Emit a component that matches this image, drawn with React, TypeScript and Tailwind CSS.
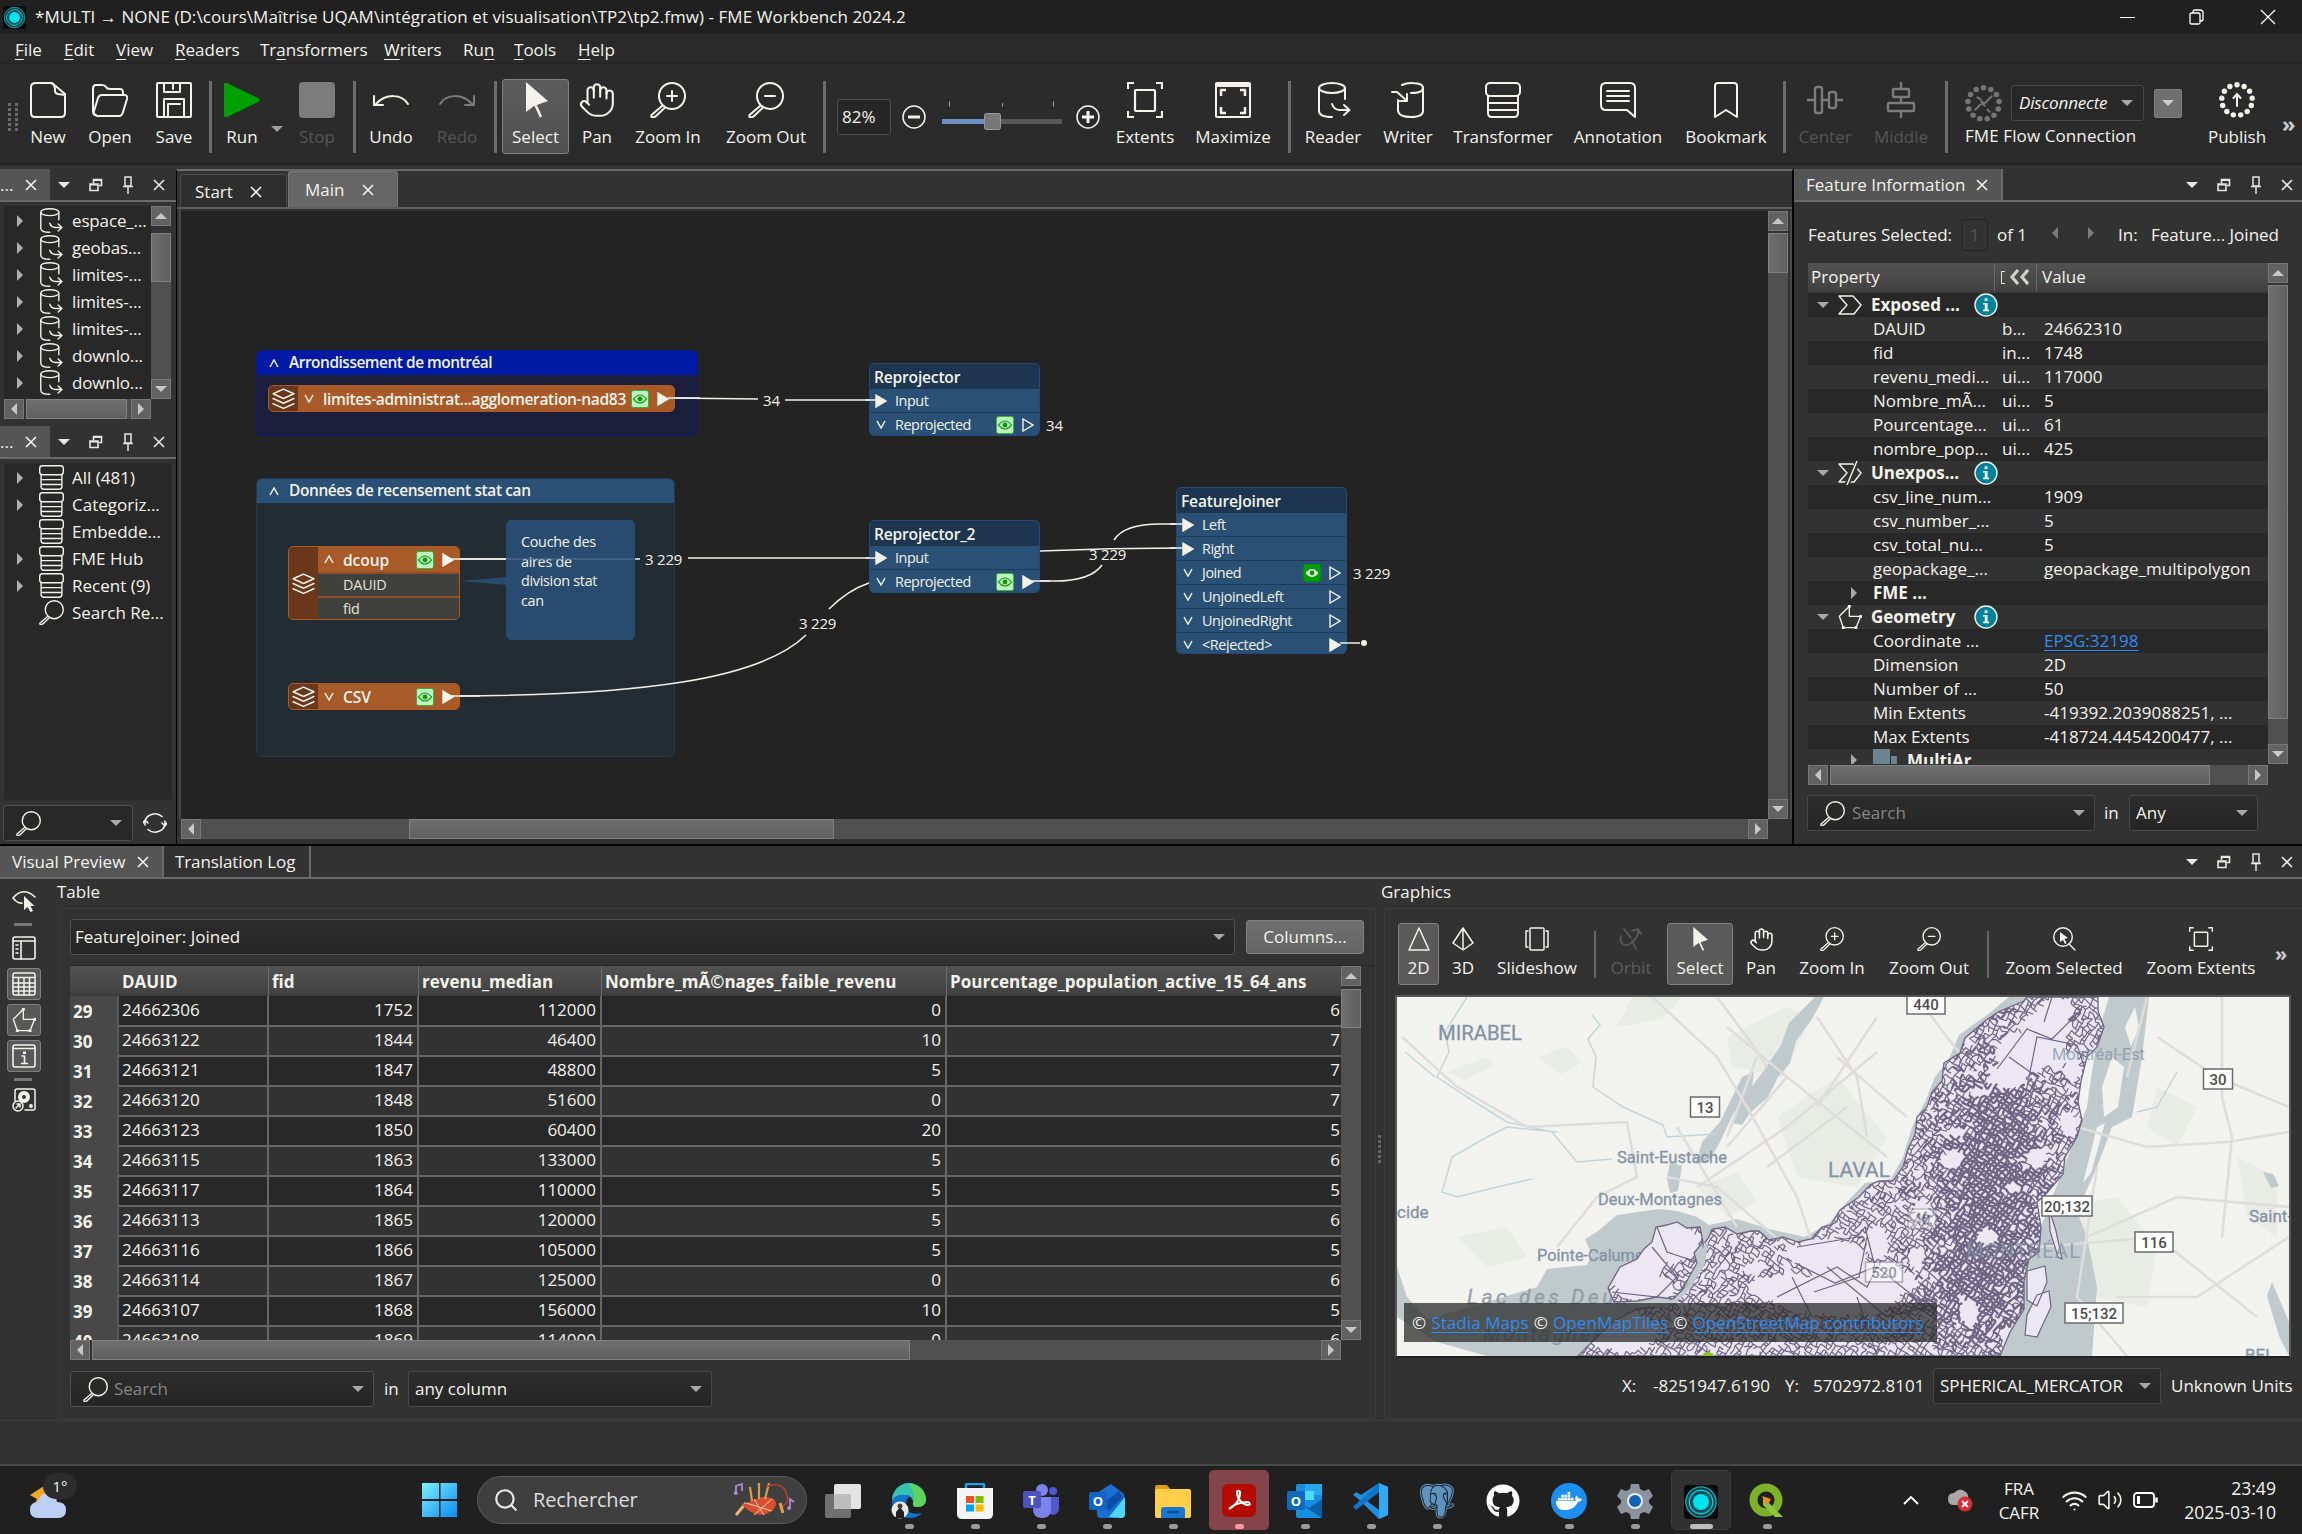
import React from "react";
import { Hand, Wifi, Volume2, Search as SearchIcon } from "lucide-react";
import { FaGithub, FaDocker } from "react-icons/fa";
import { BiLogoPostgresql } from "react-icons/bi";

type P = { children?: React.ReactNode; className?: string };

/* ---------- drawing helpers ---------- */
function G({ children, className = "w-9 h-9", vb = "0 0 36 36", sw = 2 }: P & { vb?: string; sw?: number }) {
  return (
    <svg className={"shrink-0 " + className} viewBox={vb} fill="none" stroke="currentColor" strokeWidth={sw} strokeLinecap="round" strokeLinejoin="round">
      {children}
    </svg>
  );
}
const ZoomGlyph = ({ sign, className }: { sign?: "+" | "-"; className?: string }) => (
  <G className={className}>
    <circle cx="22" cy="14" r="13" />
    <path d="M12 24 L1.500 33 Q0.500 35 3 35.500 L5.500 34.500 L14.500 26" />
    {sign && <path d="M17 14h10" />}
    {sign === "+" && <path d="M22 9v10" />}
  </G>
);
const NewGlyph = () => (
  <G><path d="M6 1h16l13 11v19q0 4-4 4H5q-4 0-4-4V5q0-4 5-4z" /><path d="M22 1.5q3 1.500 3 6v1q0 3 3 3.500l7 1" /></G>
);
const OpenGlyph = () => (
  <G><path d="M4 33 Q1 33 1 29 V7 Q1 3 4 3 H10 Q13 3 14 5 Q15 7 18 7 H28 Q31 7 31 11 V13" /><path d="M10 13 H32 Q36 13 35 17 L31 30 Q30 34 27 34 H5 Q1 33 2 29 L6 16 Q7 13 10 13z" /></G>
);
const SaveGlyph = () => (
  <G><rect x="1" y="1" width="34" height="34" rx="1" /><path d="M8 1v9h16V1M17 1v6M8 35V17h20v18M12 35V22h12" /></G>
);
const UndoGlyph = ({ flip }: { flip?: boolean }) => (
  <G><g transform={flip ? "translate(36 0) scale(-1 1)" : undefined}><path d="M35 22 C29 12 13 11 3 22" /><path d="M1 14v9h9" /></g></G>
);
const CursorGlyph = ({ className }: { className?: string }) => (
  <svg className={"shrink-0 " + (className ?? "h-9 w-9")} viewBox="0 0 36 36"><path d="M8 0v30l8-6 14-5z" fill="currentColor" /><path d="M17 22l6 13" stroke="currentColor" strokeWidth="2.500" /></svg>
);
const ExtentsGlyph = ({ className }: { className?: string }) => (
  <G className={className} sw={2.2}><path strokeLinecap="butt" d="M1 7V1h6M29 1h6v6M35 29v6h-6M7 35H1v-6" /><rect x="8" y="8" width="20" height="21" rx="1" /></G>
);
const MaximizeGlyph = () => (
  <G><rect x="1" y="1" width="34" height="34" rx="1" /><path d="M1 3h34" strokeWidth="4" /><path strokeLinecap="butt" d="M6 14V8h5M25 8h5v6M30 25v6h-5M11 31H6v-6" strokeWidth="2.500" /></G>
);
const ReaderGlyph = ({ className }: { className?: string }) => (
  <G className={className}><ellipse cx="17" cy="6" rx="13" ry="5" /><path d="M4 6v23q0 6 13 6M30 6v11" /><path d="M17 22q2 6 8 6h9M29 23l5.500 5-5.500 5" /></G>
);
const WriterGlyph = () => (
  <G><path d="M12 3q4-2 9-2 12 0 12 5t-12 5M33 6v23q0 6-12 6T8 29V18" /><path d="M2 10h5l9 8M17 12v7h-8" /></G>
);
const TransformerGlyph = ({ className }: { className?: string }) => (
  <G className={className}><rect x="1" y="1" width="34" height="13" rx="4" /><path d="M3 14v17q0 4 4 4h22q4 0 4-4V14M3 21h30M3 28h30" /></G>
);
const NoteGlyph = () => (
  <G><path d="M6 1h24q5 0 5 5v29l-8-7H6q-5 0-5-5V6q0-5 5-5z" /><path d="M7 9h22M7 14h22M7 19h22" /></G>
);
const MarkGlyph = () => <G><path d="M7 35V4q0-3 3-3h16q3 0 3 3v31l-11-7z" /></G>;
const CenterGlyph = () => (
  <G sw={2.4}><path d="M0 18h7M15 18h7M30 18h6" /><rect x="8" y="5" width="7" height="26" rx="2" /><rect x="22" y="10" width="7" height="16" rx="2" /></G>
);
const MiddleGlyph = () => (
  <G sw={2.4}><path d="M18 0v6M18 15v6M18 29v7" /><rect x="10" y="7" width="16" height="8" rx="1" /><rect x="5" y="21" width="26" height="8" rx="1" /></G>
);
const dots = Array.from({ length: 13 }, (_, i) => {
  const a = (i / 13) * Math.PI * 2 - Math.PI / 2;
  return [18 + 15.3 * Math.cos(a), 18 + 15.3 * Math.sin(a)];
});
const DotRing = ({ children, className }: P) => (
  <G className={className}>{dots.map(([x, y], i) => <circle key={i} cx={x} cy={y} r="2.700" fill="currentColor" stroke="none" />)}{children}</G>
);
const GeometryGlyph = ({ className }: { className?: string }) => (
  <G className={className} sw={2}><path d="M17 2L2 17l6 17h19l7-17H17z" /><circle cx="17" cy="2" r="1.500" /><circle cx="34" cy="17" r="1.500" /><circle cx="8" cy="34" r="1.500" /><circle cx="27" cy="34" r="1.500" /></G>
);
const Layers = ({ className = "w-6 h-6" }: P) => (
  <G className={className} vb="0 0 24 24" sw={1.5}><path d="M12 3l10 4.500-10 4.500L2 7.500zM2 12l10 4.500L22 12M2 17l10 4.500L22 17" /></G>
);
const Tri = ({ dir, className = "" }: { dir: "u" | "d" | "l" | "r"; className?: string }) => (
  <svg className={"shrink-0 " + className} width="12" height="12" viewBox="0 0 12 12">
    <path fill="currentColor" d={{ u: "M0 9L6 3l6 6z", d: "M0 3l6 6 6-6z", l: "M9 0L3 6l6 6z", r: "M3 0l6 6-6 6z" }[dir]} />
  </svg>
);
const X = ({ className = "" }: P) => (
  <svg className={"shrink-0 " + className} width="12" height="12" viewBox="0 0 12 12"><path d="M1 1l10 10M11 1L1 11" stroke="currentColor" strokeWidth="1.600" /></svg>
);
const Float = () => (
  <svg width="14" height="14" viewBox="0 0 14 14" fill="none" stroke="currentColor" strokeWidth="1.600"><path d="M4.500 5V1.500h8v6H10M4.500 2.200h8M1 6h8v6.500H1zM1 6.800h8" /></svg>
);
const Pin = () => (
  <svg width="12" height="18" viewBox="0 0 12 18" fill="none" stroke="currentColor" strokeWidth="1.500"><path d="M3 1h6v9H3zM1 10.500h10M6 11v7" /></svg>
);
const DockControls = ({ className = "" }: P) => (
  <div className={"flex shrink-0 items-center text-[#e8e8e0] " + className}>
    <div className="flex w-8 justify-center"><Tri dir="d" /></div>
    <div className="flex w-8 justify-center"><Float /></div>
    <div className="flex w-8 justify-center"><Pin /></div>
    <div className="flex w-[30px] justify-center"><X /></div>
  </div>
);

/* ---------- scroll bars ---------- */
const sbBtn = "flex items-center justify-center bg-[#626262] border border-[#777] text-[#c8c8c4] shrink-0 w-[20px] h-[20px]";
const thumb = "from-[#6e6e6e] to-[#606060] border border-[#808080] shrink-0";
function VScroll({ size, gap = "h-[2px]", className = "" }: { size: string; gap?: string; className?: string }) {
  return (
    <div className={"flex w-[20px] shrink-0 flex-col bg-[#505050] " + className}>
      <div className={sbBtn}><Tri dir="u" /></div>
      <div className={"shrink-0 bg-[#333] " + gap} />
      <div className={"bg-gradient-to-r " + thumb + " " + size} />
      <div className="flex-1" />
      <div className={sbBtn}><Tri dir="d" /></div>
    </div>
  );
}
function HScroll({ size, gap = "w-[2px] bg-[#333]", className = "" }: { size: string; gap?: string; className?: string }) {
  return (
    <div className={"flex h-[20px] shrink-0 bg-[#505050] " + className}>
      <div className={sbBtn}><Tri dir="l" /></div>
      <div className={"shrink-0 " + gap} />
      <div className={"bg-gradient-to-b " + thumb + " " + size} />
      <div className="flex-1" />
      <div className={sbBtn}><Tri dir="r" /></div>
    </div>
  );
}

/* ---------- title, menu, main toolbar ---------- */
const FmeIcon = ({ className }: { className?: string }) => (
  <svg className={className} viewBox="0 0 36 36">
    <rect width="36" height="36" rx="4" fill="#08090b" />
    <circle cx="18" cy="18" r="16" fill="#083c42" stroke="#12aab5" strokeWidth="1.500" />
    <circle cx="18" cy="18" r="12.500" fill="#064e56" stroke="#14c4d0" strokeWidth="1.500" />
    <circle cx="18" cy="18" r="8.500" fill="#00e4f2" />
  </svg>
);
function TitleBar() {
  return (
    <div className="flex h-[34px] items-center bg-[#202020]">
      <FmeIcon className="ml-[3px] h-[23px] w-[23px]" />
      <span className="ml-[9px] text-[17px] tracking-[0.06px]">*MULTI → NONE (D:\cours\Maîtrise UQAM\intégration et visualisation\TP2\tp2.fmw) - FME Workbench 2024.2</span>
      <div className="ml-auto flex items-center">
        <div className="h-px w-[15px] bg-white" />
        <svg className="ml-[54px]" width="15" height="16" viewBox="0 0 15 16" fill="none" stroke="#fff" strokeWidth="1.300"><rect x="1" y="4" width="10" height="11" rx="1.500" /><path d="M4 4V3q0-2 2-2h5q3 0 3 3v6q0 2-2 2h-1" /></svg>
        <svg className="mr-[26px] ml-[56px]" width="16" height="16" viewBox="0 0 16 16"><path d="M1 1l14 14M15 1L1 15" stroke="#fff" strokeWidth="1.300" /></svg>
      </div>
    </div>
  );
}
const menus: [string, string, string, string][] = [
  ["", "F", "ile", "w-[49px]"], ["", "E", "dit", "w-[52px]"], ["", "V", "iew", "w-[59px]"], ["", "R", "eaders", "w-[85px]"],
  ["Tr", "a", "nsformers", "w-[124px]"], ["", "W", "riters", "w-[79px]"], ["Ru", "n", "", "w-[51px]"], ["", "T", "ools", "w-[64px]"], ["", "H", "elp", "w-[60px]"],
];
function MenuBar() {
  return (
    <div className="flex h-[30px] items-center border-b border-[#242424] bg-[#2a2a2a] pt-[2px] pl-[15px]">
      {menus.map(([a, u, b, w]) => (
        <span key={a + u + b} className={w}>{a}<u className="underline-offset-[3px]">{u}</u>{b}</span>
      ))}
    </div>
  );
}
function Tool({ label, icon, cls, dim, on }: { label: string; icon: React.ReactNode; cls: string; dim?: boolean; on?: boolean }) {
  return (
    <div className={"flex h-[75px] shrink-0 flex-col items-center rounded-[3px] border pt-[2px] " + (on ? "border-[#808080] bg-gradient-to-b from-[#5c5c5c] to-[#505050] " : "border-transparent ") + (dim ? "text-[#555] " : "") + cls}>
      <div className={"flex h-9 items-center justify-center " + (dim ? "text-[#7c7c7c]" : "text-[#f3f3ea]")}>{icon}</div>
      <span className="mt-[6px] leading-[26px]">{label}</span>
    </div>
  );
}
const Sep = ({ cls }: { cls: string }) => <div className={"h-[72px] w-[3px] shrink-0 bg-[#6c6c6c] " + cls} />;
function MainToolbar() {
  return (
    <div className="flex h-[101px] items-center border-b-2 border-[#222] bg-[#2b2b2b] pt-[6px]">
      <div className="ml-2 grid w-3 grid-cols-2 gap-x-[2px] gap-y-[2px]">
        {Array.from({ length: 12 }, (_, i) => <div key={i} className="h-[3px] w-[3px] bg-[#6a6a6a]" />)}
      </div>
      <Tool label="New" icon={<NewGlyph />} cls="w-[56px]" />
      <Tool label="Open" icon={<OpenGlyph />} cls="ml-[2px] w-[64px]" />
      <Tool label="Save" icon={<SaveGlyph />} cls="ml-[4px] w-[56px]" />
      <Sep cls="ml-[7px]" />
      <Tool label="Run" cls="ml-[6px] w-[48px]" icon={<svg width="36" height="36" viewBox="0 0 36 36"><path d="M0 3q0-3 3-2l31 15q3 2 0 4L3 35q-3 1-3-2z" fill="#00a000" /></svg>} />
      <div className="flex w-[22px] justify-center pt-6 text-[#a0a0a0]"><Tri dir="d" /></div>
      <Tool label="Stop" dim cls="ml-[4px] w-[50px]" icon={<div className="h-9 w-9 rounded-[4px] bg-[#7c7c7c]" />} />
      <Sep cls="ml-[11px]" />
      <Tool label="Undo" icon={<UndoGlyph />} cls="ml-[7px] w-[56px]" />
      <Tool label="Redo" dim icon={<UndoGlyph flip />} cls="ml-[10px] w-[56px]" />
      <Sep cls="ml-[9px]" />
      <Tool label="Select" on icon={<CursorGlyph />} cls="ml-[5px] w-[67px]" />
      <Tool label="Pan" icon={<Hand size={38} strokeWidth={1.3} />} cls="ml-[4px] w-[48px]" />
      <Tool label="Zoom In" icon={<ZoomGlyph sign="+" />} cls="ml-[7px] w-[80px]" />
      <Tool label="Zoom Out" icon={<ZoomGlyph sign="-" />} cls="ml-[8px] w-[100px]" />
      <Sep cls="ml-[7px]" />
      <div className="ml-[11px] flex h-[36px] w-[54px] items-center rounded-[3px] border border-[#4e4e4e] bg-[#262626] pl-[4px]">82%</div>
      <G className="ml-[11px] h-6 w-6" vb="0 0 24 24" sw={1.5}><circle cx="12" cy="12" r="11" /><path d="M6 12h12" strokeWidth="3" strokeLinecap="butt" /></G>
      <svg className="ml-[16px] shrink-0" width="120" height="40" viewBox="0 0 120 40">
        <path d="M7.500 4v6M60.500 6v4M111.500 4v6" stroke="#888" strokeWidth="1.200" />
        <rect x="0" y="22" width="42" height="5" fill="#6d8fc4" /><rect x="58" y="22" width="62" height="5" fill="#565656" />
        <rect x="42.500" y="16.500" width="16" height="16" rx="2" fill="#787878" stroke="#999" />
      </svg>
      <G className="ml-[14px] h-6 w-6" vb="0 0 24 24" sw={1.5}><circle cx="12" cy="12" r="11" /><path d="M6 12h12M12 6v12" strokeWidth="3" strokeLinecap="butt" /></G>
      <Tool label="Extents" icon={<ExtentsGlyph />} cls="ml-[11px] w-[68px]" />
      <Tool label="Maximize" icon={<MaximizeGlyph />} cls="ml-[12px] w-[84px]" />
      <Sep cls="ml-[13px]" />
      <Tool label="Reader" icon={<ReaderGlyph />} cls="ml-[10px] w-[64px]" />
      <Tool label="Writer" icon={<WriterGlyph />} cls="ml-[13px] w-[60px]" />
      <Tool label="Transformer" icon={<TransformerGlyph />} cls="ml-[13px] w-[104px]" />
      <Tool label="Annotation" icon={<NoteGlyph />} cls="ml-[15px] w-[96px]" />
      <Tool label="Bookmark" icon={<MarkGlyph />} cls="ml-[16px] w-[88px]" />
      <Sep cls="ml-[13px]" />
      <Tool label="Center" dim icon={<CenterGlyph />} cls="ml-[9px] w-[60px]" />
      <Tool label="Middle" dim icon={<MiddleGlyph />} cls="ml-[16px] w-[60px]" />
      <Sep cls="ml-[14px]" />
      <div className="ml-[17px] flex h-[75px] w-[217px] shrink-0 flex-col pt-[6px]">
        <div className="flex h-9 items-center">
          <DotRing className="h-[37px] w-[37px] text-[#757575]"><path d="M10 24l4-4q3-3 5 0M26 11l-5 5q-2 3-5 0M12 12l3 2M22 24l2 2" /></DotRing>
          <div className="ml-[9px] flex h-9 w-[133px] items-center rounded-[3px] border border-[#484848] bg-[#282828] pl-[7px] italic">
            <span className="tracking-[-0.15px]">Disconnecte</span><Tri dir="d" className="ml-auto mr-[10px] text-[#a8a8a4]" />
          </div>
          <div className="ml-[10px] flex h-[29px] w-[28px] items-center justify-center rounded-[2px] border border-[#808080] bg-[#707070] text-[#ccc]"><Tri dir="d" /></div>
        </div>
        <span className="mt-[2px] leading-[26px] tracking-[0.1px]">FME Flow Connection</span>
      </div>
      <Tool label="Publish" icon={<DotRing><path d="M18 24V12M14.500 16L18 12l3.500 4" /></DotRing>} cls="ml-[23px] w-[64px]" />
      <span className="ml-[13px] pt-3 text-[22px] font-bold leading-none text-[#ccc]">»</span>
    </div>
  );
}

/* ---------- left docks ---------- */
function SmallDockTab() {
  return (
    <div className="flex h-[33px] shrink-0 items-center border-b-2 border-[#6a6a6a] bg-[#323232]">
      <div className="flex h-full w-[50px] items-center bg-[#555]"><span className="w-[25px]">...</span><X /></div>
      <DockControls className="-ml-[2px]" />
    </div>
  );
}
const files = ["espace_...", "geobas...", "limites-...", "limites-...", "limites-...", "downlo...", "downlo..."];
const gallery = ["All (481)", "Categoriz...", "Embedde...", "FME Hub", "Recent (9)", "Search Re..."];
function LeftColumn() {
  return (
    <div className="flex w-[176px] shrink-0 flex-col overflow-hidden">
      <SmallDockTab />
      <div className="mt-[4px] ml-[4px] flex h-[193px] w-[167px] shrink-0 bg-[#282828]">
        <div className="flex-1 overflow-hidden pt-px">
          {files.map((f, i) => (
            <div key={i} className="flex h-[27px] items-center">
              <Tri dir="r" className="ml-[10px] text-[#b0b0ac]" />
              <ReaderGlyph className="ml-[12px] h-[25px] w-[25px]" />
              <span className="ml-[9px] whitespace-nowrap tracking-[-0.15px]">{f}</span>
            </div>
          ))}
        </div>
        <VScroll size="h-[49px]" gap="h-[7px]" />
      </div>
      <HScroll size="w-[101px]" className="ml-[4px] w-[147px]" />
      <div className="h-[7px] shrink-0" />
      <SmallDockTab />
      <div className="mt-[4px] ml-[4px] h-[337px] w-[168px] shrink-0 border border-[#2c2c2c] bg-[#282828]">
        {gallery.map((f, i) => (
          <div key={f} className="flex h-[27px] items-center">
            <Tri dir="r" className={"ml-[9px] " + (i === 2 || i === 5 ? "text-transparent" : "text-[#b0b0ac]")} />
            {i === 5 ? <ZoomGlyph className="ml-[13px] h-[25px] w-[25px]" /> : <TransformerGlyph className="ml-[13px] h-[25px] w-[25px]" />}
            <span className="ml-[8px] whitespace-nowrap">{f}</span>
          </div>
        ))}
      </div>
      <div className="mt-[5px] ml-[3px] flex items-center">
        <div className="flex h-[36px] w-[130px] items-center rounded-[3px] border border-[#4e4e4e] bg-[#282828]">
          <ZoomGlyph className="ml-[12px] h-[25px] w-[25px]" /><Tri dir="d" className="mr-[10px] ml-auto text-[#a8a8a4]" />
        </div>
        <G className="ml-[10px] h-[24px] w-[24px]" vb="0 0 24 24" sw={1.6}><path d="M2 14V11A10 9 0 0 1 19 5.500M22 10v3a10 9 0 0 1-17 5.500M0 12l2-3 3 3M19 12l3 3 2-3" /></G>
      </div>
    </div>
  );
}

/* ---------- canvas ---------- */
const Eye = ({ solid }: { solid?: boolean }) => (
  <svg className="shrink-0" width="18" height="18" viewBox="0 0 18 18">
    <rect x=".5" y=".5" width="17" height="17" rx="2" fill={solid ? "#00a000" : "#bff0bf"} stroke={solid ? "#0a8a0a" : "#35b535"} />
    <path d="M2.500 9q6.500-8 13 0-6.500 8-13 0z" fill={solid ? "#e8f8e8" : "none"} stroke={solid ? "none" : "#1d9d1d"} strokeWidth="1.200" />
    <circle cx="9" cy="9" r="2.400" fill="#0b9a0b" />
  </svg>
);
const Chev = ({ up, className = "" }: { up?: boolean; className?: string }) => (
  <svg className={"shrink-0 " + className} width="10" height="9" viewBox="0 0 10 9" fill="none" stroke="#f0f0e8" strokeWidth="1.500"><path d={up ? "M1 8l4-7 4 7" : "M1 1l4 7 4-7"} /></svg>
);
const Port = ({ open, className = "" }: { open?: boolean; className?: string }) => (
  <svg className={"shrink-0 " + className} width="12" height="14" viewBox="0 0 12 14"><path d="M1 1l10 6-10 6z" fill={open ? "none" : "#f3f3ea"} stroke="#f3f3ea" strokeWidth="1.400" /></svg>
);
function Source({ name, cls, up, rows, nameCls = "tracking-[-0.1px]" }: { name: string; cls: string; up?: boolean; rows?: string[]; nameCls?: string }) {
  return (
    <div className={"absolute flex overflow-hidden rounded-[5px] border border-[#a85a28] bg-[#6b371a] " + cls}>
      <div className="flex w-[29px] shrink-0 items-center justify-center"><Layers className="h-[25px] w-[25px]" /></div>
      <div className="flex flex-1 flex-col">
        <div className="flex h-[25px] shrink-0 items-center bg-[#a85a28]">
          <Chev up={up} className="ml-[6px]" /><span className={"ml-[9px] whitespace-nowrap text-[15.6px] font-semibold " + nameCls}>{name}</span>
          <span className="ml-auto flex"><Eye /></span><Port className="mr-[5px] ml-[8px]" />
        </div>
        {rows?.map((r) => <div key={r} className="flex h-[24px] items-center border-t-2 border-[#8a4d28] bg-[#40403d] pb-px pl-[25px] text-[14.4px] tracking-[-0.2px] text-[#e4e4dc]">{r}</div>)}
      </div>
    </div>
  );
}
type PortRow = [string, "in" | "open" | "full", ("light" | "solid")?];
function Transformer({ name, cls, rows }: { name: string; cls: string; rows: PortRow[] }) {
  return (
    <div className={"absolute w-[171px] overflow-hidden rounded-[5px] border border-[#234a78] bg-[#1d354f] " + cls}>
      <div className="flex h-[25px] items-center pl-[4px] text-[15.6px] font-semibold tracking-[-0.2px]">{name}</div>
      {rows.map(([label, kind, eye]) => (
        <div key={label} className="flex h-[24px] items-center border-b border-[#1d3c5c] bg-[#2a5075] text-[14.4px]">
          {kind === "in" ? <Port className="mr-[8px] ml-[5px]" /> : <Chev className="mr-[9px] ml-[6px]" />}
          <span className={label.startsWith("Unjoined") ? "tracking-[-0.4px]" : label === "<Rejected>" ? "tracking-[-0.4px]" : "tracking-[-0.45px]"}>{label}</span>
          <span className="ml-auto flex">{eye && <Eye solid={eye === "solid"} />}</span>
          {kind !== "in" && <Port open={kind === "open"} className="mr-[5px] ml-[8px]" />}
        </div>
      ))}
    </div>
  );
}
const Count = ({ cls, t }: { cls: string; t: string }) => <span className={"absolute whitespace-nowrap text-[15px] leading-[20px] tracking-[-0.2px] " + cls}>{t}</span>;
function Canvas() {
  return (
    <div className="relative h-[608px] w-[1587px] shrink-0 overflow-hidden bg-[#232323]">
      <div className="absolute -top-[211px] -left-[181px] h-[900px] w-[1800px]">
        <div className="absolute top-[350px] left-[256px] h-[86px] w-[442px] overflow-hidden rounded-[6px] border border-[#0a1a80] bg-[#1c1f3b]">
          <div className="flex h-[24px] items-center bg-[#001aa6] pl-[12px] text-[15.4px] font-semibold tracking-[-0.45px]"><Chev up className="mr-[10px]" />Arrondissement de montréal</div>
        </div>
        <div className="absolute top-[478px] left-[256px] h-[279px] w-[419px] overflow-hidden rounded-[6px] border border-[#203a55] bg-[#232b33]">
          <div className="flex h-[24px] items-center bg-[#2a5075] pl-[12px] text-[15.4px] font-semibold tracking-[-0.35px]"><Chev up className="mr-[10px]" />Données de recensement stat can</div>
        </div>
        <svg className="absolute top-0 left-0" width="1800" height="900" fill="none" stroke="#f0f0e8" strokeWidth="1.600">
          <path d="M670 398L758 399M785 400H870M452 559H506M634 559h6M688 558H872" />
          <path d="M454 696C640 695 760 680 806 635M829 609Q848 590 869 583" />
          <path d="M1040 551Q1110 548 1180 548" />
          <path d="M1032 581H1050Q1090 582 1102 565M1114 540Q1124 524 1160 524H1180" />
        </svg>
        <Source name="limites-administrat...agglomeration-nad83" nameCls="tracking-[-0.36px]" cls="left-[268px] top-[385px] w-[407px] h-[27px]" />
        <Source name="dcoup" up rows={["DAUID", "fid"]} cls="left-[288px] top-[546px] w-[172px] h-[74px]" />
        <Source name="CSV" cls="left-[288px] top-[683px] w-[172px] h-[27px]" />
        <svg className="absolute top-[570px] left-[460px]" width="47" height="22"><path d="M0 11L47 7v8z" fill="#2a4b70" /></svg>
        <div className="absolute top-[520px] left-[506px] h-[120px] w-[129px] rounded-[5px] border border-[#234a70] bg-[#2a4b70] pt-[11px] pl-[14px] text-[14.4px] leading-[19.7px] tracking-[-0.3px]">
          Couche des<br />aires de<br />division stat<br />can
        </div>
        <Transformer name="Reprojector" cls="left-[869px] top-[363px] h-[73px]" rows={[["Input", "in"], ["Reprojected", "open", "light"]]} />
        <Transformer name="Reprojector_2" cls="left-[869px] top-[520px] h-[73px]" rows={[["Input", "in"], ["Reprojected", "full", "light"]]} />
        <Transformer name="FeatureJoiner" cls="left-[1176px] top-[487px] h-[167px]" rows={[["Left", "in"], ["Right", "in"], ["Joined", "open", "solid"], ["UnjoinedLeft", "open"], ["UnjoinedRight", "open"], ["<Rejected>", "full"]]} />
        <svg className="absolute top-0 left-0" width="1800" height="900" fill="none" stroke="#f0f0e8" strokeWidth="1.600">
          <path d="M668 398h32M450 559h56M450 696h30M866 400h14M866 558h14M1030 581h20M1170 524h14M1170 548h14M1340 643h20" />
          <path d="M506 559h128" stroke="#58779a" strokeWidth="1.200" />
          <circle cx="1364" cy="643" r="3" fill="#f0f0e8" stroke="none" />
        </svg>
        <Count t="34" cls="left-[763px] top-[390px]" />
        <Count t="3 229" cls="left-[645px] top-[549px]" />
        <Count t="3 229" cls="left-[799px] top-[613px]" />
        <Count t="34" cls="left-[1046px] top-[415px]" />
        <Count t="3 229" cls="left-[1089px] top-[544px]" />
        <Count t="3 229" cls="left-[1353px] top-[563px]" />
      </div>
    </div>
  );
}
function CanvasDock() {
  return (
    <div className="flex w-[1617px] shrink-0 flex-col border-x border-t-2 border-x-black border-t-[#6a6a6a] bg-[#323232]">
      <div className="flex h-[38px] shrink-0 items-end border-b-2 border-[#5e5e5e]">
        <div className="ml-[3px] flex h-[33px] w-[107px] items-center rounded-t-[3px] border border-b-0 border-[#4a4a4a] bg-[#2e2e2e] pt-[2px] pl-[14px]">Start<X className="ml-[17px]" /></div>
        <div className="ml-px flex h-[36px] w-[110px] items-center rounded-t-[3px] border border-b-0 border-[#787878] bg-[#666] pl-[16px]">Main<X className="ml-[18px]" /></div>
      </div>
      <div className="ml-[2px] flex shrink-0 border-l-2 border-[#484848] pt-[2px]">
        <Canvas />
        <VScroll size="h-[40px]" className="h-[608px]" />
        <div className="ml-[2px] w-[2px] shrink-0 bg-[#4a4a4a]" />
      </div>
      <HScroll size="w-[425px]" gap="w-[208px]" className="ml-[4px] w-[1587px]" />
    </div>
  );
}

/* ---------- feature information ---------- */
type FRow = { k: string; t?: string; v?: string; h?: "exp" | "unexp" | "geo"; b?: boolean; link?: boolean };
const frows: FRow[] = [
  { k: "Exposed ...", h: "exp" }, { k: "DAUID", t: "b...", v: "24662310" }, { k: "fid", t: "in...", v: "1748" }, { k: "revenu_medi...", t: "ui...", v: "117000" },
  { k: "Nombre_mÃ...", t: "ui...", v: "5" }, { k: "Pourcentage...", t: "ui...", v: "61" }, { k: "nombre_pop...", t: "ui...", v: "425" },
  { k: "Unexpos...", h: "unexp" }, { k: "csv_line_num...", v: "1909" }, { k: "csv_number_...", v: "5" }, { k: "csv_total_nu...", v: "5" },
  { k: "geopackage_...", v: "geopackage_multipolygon" }, { k: "FME ...", b: true }, { k: "Geometry", h: "geo" },
  { k: "Coordinate ...", v: "EPSG:32198", link: true }, { k: "Dimension", v: "2D" }, { k: "Number of ...", v: "50" },
  { k: "Min Extents", v: "-419392.2039088251, ..." }, { k: "Max Extents", v: "-418724.4454200477, ..." },
];
const Info = () => (
  <svg className="mr-0 ml-auto shrink-0" width="24" height="24" viewBox="0 0 24 24"><circle cx="12" cy="12" r="11" fill="#00829b" stroke="#f0f0e8" strokeWidth="1.400" /><path d="M10.700 5.300h2.800v2.600h-2.800zM9.300 10h4.200v6.500H15v1.700H9.200v-1.700h1.600v-4.800H9.300z" fill="#fff" /></svg>
);
function HeadIcon({ h }: { h: string }) {
  if (h === "geo") return <GeometryGlyph className="h-[24px] w-[24px]" />;
  return (
    <G className="h-[24px] w-[24px]" vb="0 0 24 24" sw={1.4}>
      <path d="M1 3h14l8 9-7 9H1l8-9z" />{h === "unexp" && <><path d="M9 23L20 1" stroke="#323232" strokeWidth="5" /><path d="M9 24L19 0" /></>}
    </G>
  );
}
function Combo({ children, cls }: P & { cls: string }) {
  return (
    <div className={"flex h-[36px] items-center rounded-[3px] border border-[#484848] bg-gradient-to-b from-[#2c2c2c] to-[#262626] " + cls}>
      {children}<Tri dir="d" className="mr-[9px] ml-auto text-[#a8a8a4]" />
    </div>
  );
}
function FeatureDock() {
  return (
    <div className="flex min-w-0 flex-1 flex-col border-l border-black bg-[#323232]">
      <div className="flex h-[33px] shrink-0 items-center border-b-2 border-[#6a6a6a]">
        <div className="flex h-full w-[209px] items-center border-r-2 border-[#6a6a6a] bg-[#555] pl-[12px]">Feature Information<X className="mr-[13px] ml-auto" /></div>
        <DockControls className="mr-0 ml-auto" />
      </div>
      <div className="flex h-[61px] shrink-0 items-center pt-[5px] pl-[14px]">
        <span className="w-[153px] tracking-[-0.03px]">Features Selected:</span>
        <div className="flex h-[32px] w-[27px] items-center justify-center rounded-[3px] border border-[#242424] text-[#565656]">1</div>
        <span className="ml-[9px] w-[52px]">of 1</span>
        <Tri dir="l" className="-mt-1 text-[#7c7c7c]" /><Tri dir="r" className="-mt-1 ml-[24px] text-[#7c7c7c]" />
        <span className="ml-[21px] w-[33px]">In:</span><span>Feature... Joined</span>
      </div>
      <div className="ml-[14px] flex h-[501px] shrink-0">
        <div className="w-[460px] overflow-hidden">
          <div className="flex h-[30px] border-b-2 border-[#3c3c3c] bg-gradient-to-b from-[#525252] to-[#424242]">
            <div className="flex w-[187px] items-center border-r border-[#6a6a6a] pl-[3px]">Property</div>
            <div className="flex w-[42px] items-center border-r border-[#6a6a6a] pl-[6px]">
              <div className="mr-[4px] h-[13px] w-[4px] border-y border-l border-[#e0e0da]" />
              <G className="h-[16px] w-[20px] text-[#d0d0cc]" vb="0 0 20 16" sw={3.2}><path strokeLinecap="butt" strokeLinejoin="miter" d="M9 1L3 8l6 7M19 1l-6 7 6 7" /></G>
            </div>
            <div className="flex flex-1 items-center pl-[5px]">Value</div>
          </div>
          {frows.map((r, i) => (
            <div key={i} className={"flex h-[24px] items-center whitespace-nowrap " + (i % 2 ? "bg-[#323232]" : "bg-[#282828]")}>
              {r.h ? (
                <div className="flex w-[190px] items-center pl-[9px]">
                  <Tri dir="d" className="mr-[9px] text-[#a8a8a4]" /><HeadIcon h={r.h} />
                  <span className="ml-[9px] font-bold">{r.k}</span><Info />
                </div>
              ) : (
                <>
                  <div className="flex w-[194px] items-center pl-[65px]">
                    {r.b && <Tri dir="r" className="mr-[13px] -ml-[25px] text-[#a8a8a4]" />}<span className={r.b ? "font-bold" : ""}>{r.k}</span>
                  </div>
                  <div className="w-[42px]">{r.t}</div>
                  <div className={r.link ? "text-[#2f8cf0] underline underline-offset-[3px]" : "tracking-[0.04px]"}>{r.v}</div>
                </>
              )}
            </div>
          ))}
          <div className="flex h-[15px] items-start overflow-hidden bg-[#323232] pl-[40px]">
            <Tri dir="r" className="mt-[5px] mr-[13px] text-[#a8a8a4]" />
            <div className="h-[16px] w-[17px] bg-[#6b8490]" /><div className="mt-[7px] ml-px h-[10px] w-[6px] bg-[#6b8490]" />
            <span className="ml-[10px] leading-[24px] font-bold">MultiAr</span>
          </div>
        </div>
        <VScroll size="h-[434px]" className="h-[501px]" />
      </div>
      <HScroll size="w-[380px]" className="mt-px ml-[14px] w-[460px]" />
      <div className="mt-[10px] ml-[13px] flex items-center">
        <Combo cls="w-[288px]"><ZoomGlyph className="ml-[12px] h-[25px] w-[25px]" /><span className="ml-[7px] text-[#858585]">Search</span></Combo>
        <span className="ml-[9px] w-[25px]">in</span>
        <Combo cls="w-[129px]"><span className="pl-[6px]">Any</span></Combo>
      </div>
    </div>
  );
}

/* ---------- table preview ---------- */
const trows: string[][] = [
  ["29", "24662306", "1752", "112000", "0", "6"], ["30", "24663122", "1844", "46400", "10", "7"], ["31", "24663121", "1847", "48800", "5", "7"],
  ["32", "24663120", "1848", "51600", "0", "7"], ["33", "24663123", "1850", "60400", "20", "5"], ["34", "24663115", "1863", "133000", "5", "6"],
  ["35", "24663117", "1864", "110000", "5", "5"], ["36", "24663113", "1865", "120000", "5", "6"], ["37", "24663116", "1866", "105000", "5", "5"],
  ["38", "24663114", "1867", "125000", "0", "6"], ["39", "24663107", "1868", "156000", "10", "5"], ["40", "24663108", "1869", "114000", "0", "6"],
];
const cols = "grid grid-cols-[49px_150px_150px_183px_345px_394px]";
function TablePanel() {
  return (
    <div className="flex w-[1318px] flex-col">
      <div className="-ml-px h-[29px] leading-[26px]">Table</div>
      <div className="ml-[2px] h-[511px] border border-[#3c3c3c] pt-[10px] pl-[9px]">
        <div className="flex items-center">
          <Combo cls="w-[1165px] border-[#505050]"><span className="pl-[4px]">FeatureJoiner: Joined</span></Combo>
          <div className="ml-[11px] flex h-[34px] w-[118px] items-center justify-center rounded-[3px] border border-[#808080] bg-gradient-to-b from-[#707070] to-[#646464]">Columns...</div>
        </div>
        <div className="mt-[10px] flex border-t border-[#262626]">
          <div className="h-[374px] w-[1271px] overflow-hidden">
            <div className={cols + " h-[30px] border-b-2 border-[#3c3c3c] bg-gradient-to-b from-[#525252] to-[#424242] text-[17px] leading-[31px] font-bold"}>
              {["", "DAUID", "fid", "revenu_median", "Nombre_mÃ©nages_faible_revenu", "Pourcentage_population_active_15_64_ans"].map((h, i) => (
                <div key={i} className={"pl-[3px] tracking-[0.03px] " + (i > 0 && i < 5 ? "border-r border-[#6c6c6c]" : "")}>{h}</div>
              ))}
            </div>
            {trows.map((r, i) => (
              <div key={i} className={cols + " h-[30px] leading-[28px] " + (i % 2 ? "bg-[#323232]" : "bg-[#282828]")}>
                {r.map((c, j) => (
                  <div key={j} className={
                    j === 0 ? "border-r-2 border-b border-[#2a2a2a] border-r-[#585858] bg-[#484848] pt-[2px] pl-[3px] font-bold"
                      : "border-b-2 border-[#666] " + (j === 1 ? "border-r-2 pl-[3px]" : j === 5 ? "pr-[1px] text-right" : "border-r-2 pr-[4px] text-right")}>{c}</div>
                ))}
              </div>
            ))}
          </div>
          <VScroll size="h-[39px]" gap="h-[3px]" className="h-[374px]" />
        </div>
        <HScroll size="w-[818px]" className="w-[1271px]" />
        <div className="mt-[11px] flex items-center">
          <Combo cls="w-[304px] border-[#505050]"><ZoomGlyph className="ml-[12px] h-[25px] w-[25px]" /><span className="ml-[6px] text-[#858585]">Search</span></Combo>
          <span className="ml-[10px] w-[24px]">in</span>
          <Combo cls="w-[304px]"><span className="pl-[6px]">any column</span></Combo>
        </div>
      </div>
    </div>
  );
}

/* ---------- map ---------- */
const island = "M630 0L627 4 601 15 588 24 568 41 563 56 547 66 545 84 535 95 530 110 520 120 518 138 511 152 506 170 496 184 482 184 473 188 462 200 443 213 434 228 425 230 414 242 401 245 386 240 372 243 362 234 354 234 340 237 328 230 315 232 312 240 306 248 308 262 300 275 290 290 276 302 262 310 240 312 215 325 195 345 181 359H603L613 335 627 312 627 284 632 262 642 255 644 230 640 205 648 198 666 177 668 160 680 140 685 123 681 105 684 84 690 60 700 50 707 30 701 14V0z";
const bizard = "M217 305L211 291 223 270 240 262 247 252 255 245 259 230 270 228 280 225 290 231 303 230 306 245 297 256 300 266 292 280 286 292 276 302 260 300 240 304z";
function buildMesh() {
  let seed = 7;
  const rnd = () => ((seed = (seed * 1664525 + 1013904223) % 4294967296) / 4294967296);
  const open = [[628, 55, 30, 22], [648, 30, 26, 16], [610, 78, 20, 14], [660, 12, 16, 12], [430, 258, 40, 16], [465, 285, 55, 20], [392, 292, 40, 14], [440, 305, 60, 14], [238, 274, 26, 30], [275, 246, 26, 20], [258, 292, 20, 12], [555, 162, 11, 9], [558, 135, 10, 5], [583, 95, 12, 4], [640, 160, 10, 10], [672, 128, 8, 13], [525, 210, 8, 8], [590, 240, 11, 8], [355, 272, 10, 6], [569, 45, 6, 4], [520, 262, 7, 11], [572, 315, 9, 14], [480, 245, 12, 18], [225, 335, 35, 20], [640, 275, 8, 12], [612, 338, 8, 10], [660, 55, 10, 20], [675, 70, 8, 16], [615, 190, 7, 5], [545, 110, 6, 3]];
  const s = 4.3, cos = Math.cos(-0.95), sin = Math.sin(-0.95), n = 180;
  const pts: number[][][] = [];
  for (let i = 0; i < n; i++) {
    pts.push([]);
    for (let j = 0; j < n; j++) {
      const u = (i - n / 2) * s + (rnd() - 0.5) * 3.2, v = (j - n / 2) * s + (rnd() - 0.5) * 3.2;
      pts[i].push([440 + u * cos - v * sin, 200 + u * sin + v * cos]);
    }
  }
  let thin = "", dense = "";
  const seg = (a: number[], b: number[]) => {
    const x = (a[0] + b[0]) / 2, y = (a[1] + b[1]) / 2;
    if (x < 175 || x > 712 || y < -2 || y > 362) return;
    for (const [cx, cy, rx, ry] of open) if (((x - cx) / rx) ** 2 + ((y - cy) / ry) ** 2 < 0.85 + rnd() * 0.3) return;
    const core = Math.exp(-(((x - 598) / 60) ** 2) - (((y - 165) / 110) ** 2)) + 0.8 * Math.exp(-(((x - 580) / 50) ** 2) - (((y - 290) / 70) ** 2));
    const wave = 0.5 + 0.5 * Math.sin(x * 0.13 + y * 0.07) * Math.cos(y * 0.15 - x * 0.05);
    if (rnd() > 0.62 + 0.25 * core + 0.15 * wave) return;
    const d = `M${a[0].toFixed(1)} ${a[1].toFixed(1)}L${b[0].toFixed(1)} ${b[1].toFixed(1)}`;
    if (core * 0.8 + wave * 0.4 > 0.25 + rnd() * 0.65) dense += d; else thin += d;
  };
  for (let i = 0; i < n - 1; i++) for (let j = 0; j < n - 1; j++) { seg(pts[i][j], pts[i + 1][j]); seg(pts[i][j], pts[i][j + 1]); }
  return { thin, dense };
}
const mesh = buildMesh();
const Shield = ({ x, y, w, t, o = 1 }: { x: number; y: number; w: number; t: string; o?: number }) => (
  <g opacity={o}><rect x={x - w / 2} y={y - 10} width={w} height="20" fill="#fff" stroke="#6b6b6b" strokeWidth="1.500" /><text x={x} y={y + 5.5} textAnchor="middle" fontSize="15" fontWeight="500" fill="#4c4c4c">{t}</text></g>
);
function MapView() {
  return (
    <div className="relative h-[359px] w-[892px] overflow-hidden bg-[#f2f2ef]">
      <svg width="892" height="359" viewBox="0 0 892 359" fontFamily="Roboto, sans-serif">
        <g fill="#e9ebe5">
          <path d="M235 0l50 0-20 22-45 8zM50 75l40-15 8 8-30 15zM140 60l30-10 15 15-20 12zM330 40l60-30 25 10-30 60-50-10z" />
          <path d="M380 120l60-40 50 60-30 50-60-10zM660 210l60-10 40 50-10 60-60-10zM840 160l40 20v60l-30-20zM760 90l40 20-20 40-30-20zM60 240l50-10 20 30-40 10zM300 190l40-15 20 30-30 15z" />
        </g>
        <g fill="#c0c9cb">
          <path d="M612 0L590 18 562 38 552 62 538 80 528 105 515 130 506 160 494 182 468 186 450 205 432 226 408 240 372 232 340 222 312 228 300 220 280 214 262 212 220 218 200 235 188 242 195 258 190 268 150 272 140 290 90 305 30 322 10 300 0 270V320L40 345 90 359H200L260 320 480 270 560 120 660 0z" />
          <path d="M712 0H752L745 60 735 120 715 130 700 170 680 215 690 240 700 290 695 359H600L640 240 690 110 700 40z" />
          <path d="M418 0h9l-12 22-16 22-6 22-12 14-10 20-18 16-8 12-10-2 5-20 16-18 12-16 16-24 8-22z" />
          <path d="M345 80l12-5-2 15-18 25-14 30-12 20-12 2 6-22 18-20z" />
          <path d="M273 165l12 4-4 25-8 2-3-15zM866 175l10 2 6 12-8 2zM875 285l17 40v34l-10-20-12-40z" />
        </g>
        <g fill="#f2f2ef"><path d="M705 90l10-30 12 10-6 40-14 10zM728 30l10-20 4 20-8 20zM700 130l8-4-14 50-8 10z" /></g>
        <g fill="none" stroke="#c3d5d8" strokeWidth="1.500">
          <path d="M70 0L48 35 52 55 40 80 70 100 110 125 155 135 180 165 215 162M195 18l8 10-12 14 8 18-3 30 30 20 40 18 4 12 50-3M160 135L110 130 90 140 55 160 45 195 60 200 100 190 135 182M8 55l30 25M780 75l-20 35-20 5" />
        </g>
        <g fill="none" stroke="#dedddb" strokeWidth="2.600">
          <path d="M5 40L60 90 130 130 230 125 240 180 200 200 160 250M255 0L320 60 350 110 400 200 415 245M520 0l30 40 40 50M440 60L480 95 510 120M300 190l90-60 90-75M330 30l60 50 100 80M280 130l60 100M420 20l40 60 10 60M680 130l70 20 80-5 62-10M825 0v100l10 40-10 100M700 170l-20 130 50 59M750 0l-20 80M760 40l60 40 72 30M690 240l90-40 112 10M720 300h80l92-60M640 250l120-10 100 80" />
          <path d="M270 180l50 10 70 60M360 60l-30 80M390 80l-60 70M450 110l-80 60M480 20l-60 90M320 0l30 40 20 30" />
        </g>
        <g fontSize="17" fill="#8492a6" stroke="#8492a6" strokeWidth=".3">
          <text x="41" y="43" fontSize="20" textLength="84" lengthAdjust="spacingAndGlyphs">MIRABEL</text>
          <text x="220" y="166" textLength="110" lengthAdjust="spacingAndGlyphs">Saint-Eustache</text>
          <text x="431" y="180" fontSize="21" textLength="62" lengthAdjust="spacingAndGlyphs">LAVAL</text>
          <text x="201" y="208" textLength="124" lengthAdjust="spacingAndGlyphs">Deux-Montagnes</text>
          <text x="0" y="221">cide</text>
          <text x="140" y="264" textLength="112" lengthAdjust="spacingAndGlyphs">Pointe-Calumet</text>
          <text x="852" y="225">Saint-</text>
          <text x="848" y="364">BEL</text>
          <text x="70" y="307" fontSize="21" fontStyle="italic" fill="#9aa3a8" textLength="160">Lac des Deux</text>
          <text x="86" y="344" fontSize="21" fontStyle="italic" fill="#9aa3a8" textLength="120">Montagnes</text>
        </g>
        <clipPath id="land"><path d={island + bizard} /></clipPath>
        <g>
          <path d={island} fill="#ebe8f4" stroke="#6f6584" strokeWidth="1.300" />
          <path d={bizard} fill="#ebe8f4" />
          <g clipPath="url(#land)" fill="none" stroke="#6f6584">
            <path d={mesh.thin} strokeWidth="1.200" />
            <path d={mesh.dense} strokeWidth="2.300" />
            <path strokeWidth="1.200" d="M600 72l30-40 25 10 30-30M628 100l12-60 40 8 10 30M612 60l28 20-8 28M655 0l-8 25M400 250l60-10 8-10 10 40-40 16-40-20M380 300l60-30 30 20 10-20 50 40M395 280l20 40M470 240l-8 40-45 15M460 300l20 59M430 270l60 50 40-10M215 295l45 5 20-20-25-30M260 230l10 25 30 10" />
          </g>
          <path d={bizard} fill="none" stroke="#6f6584" strokeWidth="1.300" />
          <path d="M309 246l-3 20-14 24-14 14-20 6" stroke="#c0c9cb" strokeWidth="4" fill="none" />
          <g fill="#ebe8f4" stroke="#6f6584" strokeWidth="1.200"><path d="M652 212l7 22 6 28-4-2-8-26zM630 274l18-5 2 16-10 24-10-6zM640 298l12-4 2 16-14 30-12-2 2-20z" /></g>
        </g>
        <g fill="#8492a6" opacity=".75">
          <text x="569" y="261" fontSize="20" textLength="114">MONTRÉAL</text>
          <text x="655" y="63" fontSize="17" textLength="93" lengthAdjust="spacingAndGlyphs">Montréal-Est</text>
        </g>
        <Shield x={529} y={7} w={38} t="440" /><Shield x={308} y={110} w={29} t="13" /><Shield x={821} y={82} w={29} t="30" />
        <Shield x={670} y={209} w={50} t="20;132" /><Shield x={757} y={245} w={38} t="116" /><Shield x={697} y={316} w={58} t="15;132" />
        <Shield x={487} y={275} w={37} t="520" o={0.5} /><Shield x={525} y={222} w={28} t="40" o={0.35} />
        <circle cx="311" cy="362" r="7" fill="#8fc31f" />
      </svg>
      <div className="absolute top-[306px] left-[7px] flex h-[39px] w-[533px] items-center gap-[5px] bg-[#2b2b2b]/75 pt-px pl-[8px] tracking-[0.08px] whitespace-nowrap">
        ©<span className="text-[#2f8cf0] underline underline-offset-[3px]">Stadia Maps</span>©<span className="text-[#2f8cf0] underline underline-offset-[3px]">OpenMapTiles</span>©<span className="text-[#2f8cf0] underline underline-offset-[3px]">OpenStreetMap contributors</span>
      </div>
    </div>
  );
}
function GTool({ label, icon, cls, dim, on }: { label: string; icon: React.ReactNode; cls: string; dim?: boolean; on?: boolean }) {
  return (
    <div className={"flex h-[62px] shrink-0 flex-col items-center rounded-[3px] border pt-[3px] whitespace-nowrap " + (on ? "border-[#808080] bg-[#5a5a5a] " : "border-transparent ") + (dim ? "text-[#5c5c5c] " : "") + cls}>
      <div className="flex h-6 items-center">{icon}</div>
      <span className="mt-[4px] leading-[26px]">{label}</span>
    </div>
  );
}
const g24 = "h-6 w-6";
function GraphicsPanel() {
  return (
    <div className="flex w-[920px] flex-col">
      <div className="-ml-px h-[29px] leading-[26px]">Graphics</div>
      <div className="ml-[2px] h-[511px] border border-r-0 border-[#3c3c3c] pt-[14px] pl-[10px]">
        <div className="ml-[3px] flex items-center">
          <GTool label="2D" on cls="w-[41px]" icon={<G className={g24} vb="0 0 24 24" sw={1.500}><path d="M12 1L2 23h20z" /></G>} />
          <GTool label="3D" cls="ml-[4px] w-[40px]" icon={<G className={g24} vb="0 0 24 24" sw={1.500}><path d="M12 1L2 16l10 7 10-7zM12 1v22" /></G>} />
          <GTool label="Slideshow" cls="ml-[12px] w-[84px]" icon={<G className={g24} vb="0 0 24 24" sw={1.500}><rect x="5" y="1" width="14" height="22" rx="1" /><path d="M3 4H1v16h2M21 4h2v16h-2" /></G>} />
          <div className="ml-[15px] h-[47px] w-[2px] bg-[#666]" />
          <GTool label="Orbit" dim cls="ml-[11px] w-[48px]" icon={<G className={g24} vb="0 0 24 24" sw={1.600}><path d="M5 2l7 9M13 14l4 8M2 9c-2 8 4 12 10 7 5-4 8-9 7-14M13 4l6-2 3 5" /></G>} />
          <GTool label="Select" on cls="ml-[12px] w-[66px]" icon={<CursorGlyph className={g24} />} />
          <GTool label="Pan" cls="ml-[8px] w-[40px]" icon={<Hand size={25} strokeWidth={1.500} />} />
          <GTool label="Zoom In" cls="ml-[13px] w-[76px]" icon={<ZoomGlyph sign="+" className={g24} />} />
          <GTool label="Zoom Out" cls="ml-[15px] w-[88px]" icon={<ZoomGlyph sign="-" className={g24} />} />
          <div className="ml-[14px] h-[47px] w-[2px] bg-[#666]" />
          <GTool label="Zoom Selected" cls="ml-[13px] w-[124px]" icon={<G className={g24} vb="0 0 24 24" sw={1.400}><circle cx="11" cy="10" r="9.300" /><path d="M17 17l6 6" /><path d="M8 5v10l3-2 2 4 1.500-1-2-4 3.500-1z" fill="currentColor" stroke="none" /></G>} />
          <GTool label="Zoom Extents" cls="ml-[17px] w-[116px]" icon={<ExtentsGlyph className={g24} />} />
          <span className="ml-[16px] text-[20px] leading-none font-bold text-[#ccc]">»</span>
        </div>
        <div className="mt-[10px] w-[896px] border-2 border-[#565656] border-b-[#222]"><MapView /></div>
        <div className="mt-[10px] flex items-center pl-[227px] whitespace-nowrap">
          <span className="w-[31px]">X:</span><span className="w-[132px]">-8251947.6190</span><span className="w-[28px]">Y:</span><span className="w-[120px]">5702972.8101</span>
          <Combo cls="w-[228px]"><span className="pl-[6px] tracking-[-0.08px]">SPHERICAL_MERCATOR</span></Combo>
          <span className="ml-[10px]">Unknown Units</span>
        </div>
      </div>
    </div>
  );
}
const SideBtn = ({ children, on }: P & { on?: boolean }) => (
  <div className={"flex h-[32px] w-[34px] items-center justify-center rounded-[3px] border " + (on ? "border-[#808080] bg-[#585858]" : "border-transparent")}>{children}</div>
);
function BottomDock() {
  return (
    <div className="flex h-[574px] flex-col bg-[#323232]">
      <div className="flex h-[33px] shrink-0 items-center border-b-2 border-[#6a6a6a]">
        <div className="flex h-full w-[164px] items-center border-r-2 border-[#6a6a6a] bg-[#555] pl-[12px]">Visual Preview<X className="mr-[13px] ml-auto" /></div>
        <div className="flex h-full w-[147px] items-center border-r-2 border-[#6a6a6a] pl-[11px] tracking-[-0.1px] whitespace-nowrap">Translation Log</div>
        <DockControls className="mr-0 ml-auto" />
      </div>
      <div className="flex">
        <div className="flex w-[58px] flex-col pt-[6px] pl-[7px]">
          <SideBtn><G className={g24} vb="0 0 24 24" sw={1.600}><path d="M1 9Q11-3 23 8M1 9q5 6 9 5" /><path d="M12 7v14l3.500-3 3 5 2.500-1-2.500-5h4z" fill="currentColor" stroke="none" /></G></SideBtn>
          <div className="my-[6px] ml-[7px] h-[3px] w-[18px] bg-[#777]" />
          <SideBtn><G className={g24} vb="0 0 24 24" sw={1.600}><rect x="1" y="1" width="22" height="22" rx="2" /><path d="M1 5h22M9 5v18M4 9h2M4 13h2M4 17h2" /></G></SideBtn>
          <div className="mt-[4px] flex flex-col gap-[4px]">
            <SideBtn on><G className={g24} vb="0 0 24 24" sw={1.500}><rect x="1" y="1" width="22" height="22" rx="2" /><path d="M1 5.500h22M1 11h22M1 15h22M1 19h22M6.500 6v17M12 6v17M17.500 6v17" /></G></SideBtn>
            <SideBtn on><GeometryGlyph className={g24} /></SideBtn>
            <SideBtn on><G className={g24} vb="0 0 24 24" sw={1.600}><rect x="1" y="1" width="22" height="22" rx="2" /><path d="M1 4.500h22" /><path strokeLinecap="butt" d="M9.500 12h3v7.500M9 19.500h7" /><path d="M11 7.500h3v2.500h-3z" fill="currentColor" stroke="none" /></G></SideBtn>
          </div>
          <div className="mt-[6px] mb-[3px] ml-[7px] h-[3px] w-[18px] bg-[#777]" />
          <SideBtn><G className={g24} vb="0 0 24 24" sw={1.500}><path d="M3 13V3q0-2 2-2h16q2 0 2 2v17q0 2-2 2h-8" /><circle cx="12" cy="9" r="4" strokeWidth="4" /><circle cx="6" cy="18" r="5" fill="#323232" /><path d="M4 20l4-4M5 16h3v3" /><circle cx="19" cy="18" r="1.200" fill="currentColor" /></G></SideBtn>
        </div>
        <TablePanel />
        <div className="flex w-[6px] flex-col items-center justify-center gap-[2px]">
          {Array.from({ length: 6 }, (_, i) => <div key={i} className="h-[3px] w-[3px] bg-[#666]" />)}
        </div>
        <GraphicsPanel />
      </div>
    </div>
  );
}

/* ---------- taskbar ---------- */
function TaskIcon({ children, dot, cls = "", bg = "" }: P & { dot?: string; cls?: string; bg?: string }) {
  return (
    <div className={"flex h-[60px] w-[60px] shrink-0 flex-col items-center rounded-[5px] pt-[12px] " + bg + " " + cls}>
      <div className="flex h-[38px] items-center justify-center">{children}</div>
      {dot && <div className={"mt-[4px] h-[5px] rounded-full " + dot} />}
    </div>
  );
}
const dot = "w-[9px] bg-[#9a9a9a]";
const S = ({ children }: P) => <svg width="36" height="36" viewBox="0 0 36 36">{children}</svg>;
function Taskbar() {
  return (
    <div className="flex h-[68px] items-center bg-[#202020]">
      <div className="relative ml-[28px] h-[50px] w-[52px] shrink-0">
        <svg className="absolute top-[8px] left-0" width="42" height="38" viewBox="0 0 42 38"><path d="M2 12l14-9 3 14-13 6 3-7z" fill="#f5a623" /><path d="M10 35q-8 0-8-8t8-8q2-9 10-9t9 9q9 0 9 8t-8 8z" fill="#bcd0f5" /></svg>
        <div className="absolute -top-[2px] left-[15px] flex h-[26px] w-[34px] items-center justify-center rounded-full bg-[#2c2c2c] text-[15px]">1°</div>
      </div>
      <svg className="ml-[342px] shrink-0" width="36" height="36" viewBox="0 0 36 36"><path d="M0 1h17v16H0zM18.500 1H35v16H18.500zM0 19h17v16H0zM18.500 19H35v16H18.500z" fill="url(#wg)" /><defs><linearGradient id="wg" x1="0" y1="0" x2="1" y2="1"><stop stopColor="#7df0ff" /><stop offset="1" stopColor="#0a8cf0" /></linearGradient></defs></svg>
      <div className="ml-[19px] flex h-[48px] w-[330px] shrink-0 items-center rounded-full border border-[#5a5a5a] bg-[#3f3f3f] pl-[15px]">
        <SearchIcon size={26} color="#e8e8e8" /><span className="ml-[14px] text-[20px] tracking-[-0.15px] text-[#ddd]">Rechercher</span>
        <svg className="mr-[8px] ml-auto" width="64" height="38" viewBox="0 0 64 38" fill="none">
          <path d="M2 34L12 22" stroke="#f0b070" strokeWidth="3" /><path d="M8 24Q22 38 34 32 46 26 40 18 30 14 22 18z" fill="#d8502f" /><path d="M12 22l26 8M20 18l10 16M38 18L20 34" stroke="#f3c8b0" />
          <path d="M18 20l-2-14M25 18V2M31 18l4-16" stroke="#d9a04a" strokeWidth="2.200" /><path d="M32 6q20-8 22 14l-8 8" stroke="#b04030" strokeWidth="1.500" /><path d="M46 22l3 10" stroke="#e0a040" strokeWidth="3" />
          <path d="M2 12V5l6-2v7M56 26v-8l4 3" stroke="#a78bda" strokeWidth="1.800" /><circle cx="1.800" cy="12" r="2" fill="#a78bda" /><circle cx="55" cy="27" r="2" fill="#a78bda" />
        </svg>
      </div>
      <TaskIcon cls="ml-[6px]"><S><rect x="9" y="1" width="27" height="25" rx="2" fill="#e4e4e4" /><rect x="0" y="11" width="26" height="24" rx="2" fill="#707070" /><rect x="9" y="11" width="17" height="15" fill="#bdbdbd" /></S></TaskIcon>
      <TaskIcon cls="ml-[6px]" dot={dot}><S><path d="M1 18A17 17 0 0 1 35 16q0 8-9 8-5 0-4-4 0-8-9-8-9 1-12 6z" fill="#35c1b4" /><path d="M18 1a17 17 0 0 1 17 15q0 8-9 8-4 0-4-3 4-8-4-20z" fill="#5fd45a" /><path d="M1 18q0 17 18 17 8 0 12-5-14 3-16-7 0-8 4-10-14-4-18 5z" fill="#1173c9" /><circle cx="9" cy="27" r="8.500" fill="#e8e8e8" /><path d="M5 35v-6l4-5 4 5v6z" fill="#222" /><circle cx="9" cy="23" r="2.500" fill="#443" /></S></TaskIcon>
      <TaskIcon cls="ml-[6px]" dot={dot}><S><path d="M9 7V2q0-1 1-1h16q1 0 1 1v5" fill="none" stroke="#1fa2e8" strokeWidth="2.500" /><path d="M0 5h36v26q0 5-5 5H5q-5 0-5-5z" fill="#f4f4f4" /><path d="M9 13h8v7H9z" fill="#f04e23" /><path d="M18.500 13h8v7h-8z" fill="#7eba00" /><path d="M9 21.500h8v7H9z" fill="#00a3ee" /><path d="M18.500 21.500h8v7h-8z" fill="#ffb800" /></S></TaskIcon>
      <TaskIcon cls="ml-[6px]" dot={dot}><S><circle cx="19" cy="7" r="6" fill="#7b83eb" /><circle cx="30" cy="8" r="4" fill="#5059c9" /><path d="M24 14h12v11q0 6-6 7-6-1-6-5z" fill="#5059c9" /><path d="M10 14h18v12q0 9-9 9t-9-9z" fill="#7b83eb" /><rect x="0" y="8" width="18" height="17" rx="2" fill="#4b53bc" /><text x="9" y="21.500" fontSize="13" fontWeight="700" fill="#fff" textAnchor="middle">T</text></S></TaskIcon>
      <TaskIcon cls="ml-[6px]" dot={dot}><S><path d="M8 10L22 1l13 10v20q0 4-4 4H12q-4 0-4-4z" fill="#1a6fd0" /><path d="M20 34L36 14v17q0 4-4 4z" fill="#4fd8ff" /><path d="M14 20L30 8l4 6-14 14z" fill="#0b4fa8" /><rect x="0" y="9" width="18" height="18" rx="2" fill="#0f64c4" /><text x="9" y="23" fontSize="13" fontWeight="700" fill="#fff" textAnchor="middle">O</text></S></TaskIcon>
      <TaskIcon cls="ml-[6px]" dot={dot}><S><path d="M0 4q0-2 2-2h10l4 5H0z" fill="#e09a10" /><path d="M0 8q0-2 2-2h32q2 0 2 2v25q0 2-2 2H2q-2 0-2-2z" fill="#ffcf4a" /><path d="M6 35V27q0-3 3-3h18q3 0 3 3v8z" fill="#1678d2" /><path d="M12 29h12" stroke="#0b4d90" strokeWidth="2.500" /></S></TaskIcon>
      <TaskIcon cls="ml-[6px]" bg="bg-[#84454a]" dot="w-[9px] bg-[#ff9aa4]"><S><rect x="1" y="1" width="34" height="33" rx="6" fill="#b30b00" /><path d="M8 26c6-3 11-9 11-16 0-3-3-3-3 0 0 6 6 12 11 12 3 0 2-3-1-3-6 0-14 3-17 6" fill="none" stroke="#fff" strokeWidth="2" /></S></TaskIcon>
      <TaskIcon cls="ml-[6px]" dot={dot}><S><rect x="9" y="1" width="26" height="34" rx="2" fill="#1490df" /><path d="M18 1h17v11H18z" fill="#28a8ea" /><path d="M18 8h9v9h-9z" fill="#50d9ff" /><path d="M9 18l26 17V16L22 25z" fill="#0a5ea8" /><rect x="0" y="8" width="18" height="19" rx="2" fill="#0f6cbd" /><text x="9" y="22.500" fontSize="13" fontWeight="700" fill="#fff" textAnchor="middle">O</text></S></TaskIcon>
      <TaskIcon cls="ml-[6px]" dot={dot}><S><path d="M26 0l9 4v28l-9 4L3 14l-3-2 3-3 5 3z" fill="#1f8fe0" /><path d="M26 9v18L14 18z" fill="#202020" /><path d="M0 24l3 3 23-18V0L3 21z" fill="#0b76c8" /><path d="M26 0l9 4v28l-9 4z" fill="#35a8f2" /></S></TaskIcon>
      <TaskIcon cls="ml-[6px]" dot={dot}><BiLogoPostgresql size={42} color="#5f93bf" /></TaskIcon>
      <TaskIcon cls="ml-[6px]"><FaGithub size={34} color="#fff" /></TaskIcon>
      <TaskIcon cls="ml-[6px]" dot={dot}><div className="flex h-[36px] w-[36px] items-center justify-center rounded-full bg-[#1d8ff0]"><FaDocker size={26} color="#fff" /></div></TaskIcon>
      <TaskIcon cls="ml-[6px]" dot={dot}><S><path d="M14 1h8l1 5 4 2 5-2 4 7-4 4v3l4 4-4 7-5-2-4 2-1 5h-8l-1-5-4-2-5 2-4-7 4-4v-3l-4-4 4-7 5 2 4-2z" fill="#8b949e" /><circle cx="18" cy="18" r="8" fill="#e8eef5" /><circle cx="18" cy="18" r="6" fill="#1263b8" /></S></TaskIcon>
      <TaskIcon cls="ml-[6px]" bg="bg-[#303030] border border-[#3c3c3c]" dot="w-[23px] bg-[#c0bcbc]"><FmeIcon className="h-[34px] w-[34px]" /></TaskIcon>
      <TaskIcon cls="ml-[6px]" dot={dot}><S><circle cx="17" cy="17" r="12.500" fill="none" stroke="#7fb02a" strokeWidth="8" /><path d="M14 14l20 20h-8L14 22z" fill="#8cc63f" /><path d="M13 13l9 3-4 7z" fill="#f08a24" /></S></TaskIcon>
      <div className="ml-auto flex items-center pr-[26px]">
        <svg width="16" height="10" viewBox="0 0 16 10"><path d="M1 9l7-7 7 7" stroke="#fff" strokeWidth="1.800" fill="none" /></svg>
        <svg className="ml-[29px]" width="26" height="24" viewBox="0 0 26 24"><path d="M6 17Q0 17 0 11t6-6q6-7 13 0 3 6-1 12z" fill="#a8a8a8" /><circle cx="17" cy="16" r="7.500" fill="#d92c2c" /><path d="M14 13l6 6M20 13l-6 6" stroke="#fff" strokeWidth="1.800" /></svg>
        <div className="ml-[22px] w-[46px] pt-px text-center leading-[24px]">FRA<br />CAFR</div>
        <Wifi className="ml-[19px]" size={27} strokeWidth={1.800} />
        <Volume2 className="ml-[9px]" size={26} strokeWidth={1.500} />
        <svg className="ml-[10px]" width="26" height="16" viewBox="0 0 26 16" fill="none" stroke="#fff" strokeWidth="1.800"><rect x="1" y="1" width="20" height="14" rx="3" /><path d="M23.500 5.500v5" strokeWidth="2.500" /><path d="M4 4h3v8H4z" fill="#fff" stroke="none" /></svg>
        <div className="ml-[21px] w-[96px] text-right text-[17.6px] leading-[24px] whitespace-nowrap">23:49<br />2025-03-10</div>
      </div>
    </div>
  );
}

export default function App() {
  return (
    <div className="flex h-[1534px] w-[2302px] flex-col overflow-hidden bg-[#2b2b2b] font-['Open_Sans',sans-serif] text-[17px] leading-[24px] text-[#f3f3ec]">
      <TitleBar />
      <MenuBar />
      <MainToolbar />
      <div className="h-[4px] bg-[#323232]" />
      <div className="flex h-[675px] bg-[#323232]">
        <LeftColumn />
        <CanvasDock />
        <FeatureDock />
      </div>
      <div className="h-[2px] bg-black" />
      <BottomDock />
      <div className="h-[44px] border-t border-[#3c3c3c] bg-[#323232]" />
      <div className="h-[2px] bg-[#484848]" />
      <Taskbar />
    </div>
  );
}
